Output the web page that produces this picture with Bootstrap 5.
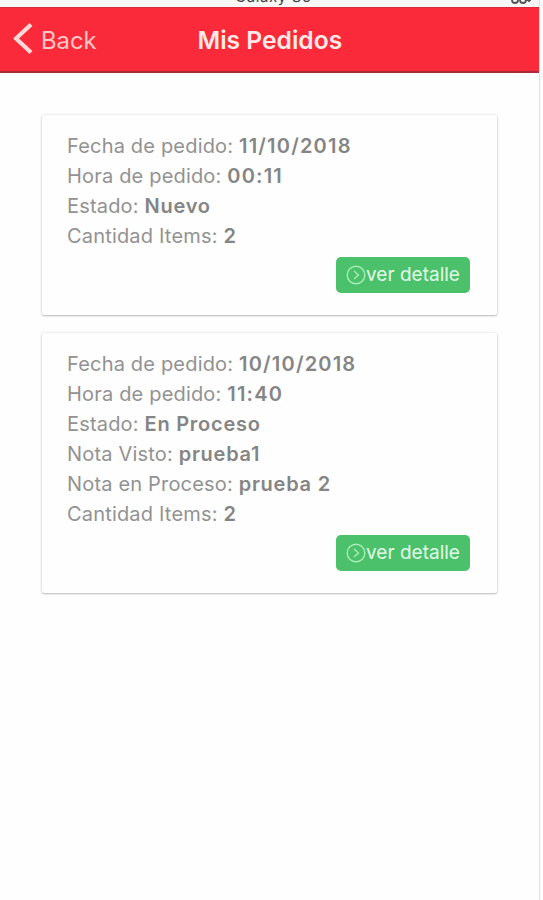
<!DOCTYPE html>
<html lang="es">
<head>
<meta charset="utf-8">
<meta name="viewport" content="width=device-width, initial-scale=1">
<title>Mis Pedidos</title>
<link href="https://cdn.jsdelivr.net/npm/bootstrap@5.3.0/dist/css/bootstrap.min.css" rel="stylesheet">
<style>
body{font-family:Inter,"Liberation Sans",sans-serif;height:900px;background:#fdfdfd}
.phone{width:540px;height:900px;background:#fefefe;border-right:1px solid #e2e2e2}
.device-bar{height:7px;background:#f7f7f7;color:#444;font-size:15px;line-height:16px}
.device-name{width:76px;margin-left:235px;margin-top:-11px;letter-spacing:.6px}
.device-state{margin-right:8px;margin-top:-11px}
.topbar{height:66px;background:#fb2a3b;border-top:1px solid #d92a3c;border-bottom:2px solid #a82b3b;padding:2px 0 0 13px}
.back-link{color:#ffc6c4;font-size:23.8px;width:184.5px;gap:8px}
.back-link svg{margin-top:-3px}
.page-title{color:#ffe9e6;font-size:24.6px;font-weight:600}
.orders{padding:42px 42px 0 42px;gap:18px}
.order{border-radius:2px;background:#fefefe;box-shadow:0 1px 2px rgba(0,0,0,.23),0 0 3px rgba(0,0,0,.13);padding:17.4px 27px 22px 25px;color:#929292;font-size:20px;line-height:29.9px;letter-spacing:.18px}
.order strong{font-weight:600;color:#858585;letter-spacing:.75px}
.order .order-date{letter-spacing:1.2px}
.detail-btn{--bs-btn-color:#e2fbe7;--bs-btn-bg:#4bc16c;--bs-btn-border-color:#4bc16c;--bs-btn-hover-bg:#42b462;--bs-btn-hover-color:#fff;width:134px;height:36px;margin-top:5px;padding:0;border:0;border-radius:5px;font-size:19px;line-height:36px;letter-spacing:0}
</style>
</head>
<body>
<div class="phone d-flex flex-column overflow-hidden">
  <div class="device-bar d-flex justify-content-between overflow-hidden flex-shrink-0">
    <span class="device-name text-nowrap">Galaxy S5</span>
    <svg class="device-state" width="20" height="16" viewBox="0 0 20 16" fill="none" stroke="#555" stroke-width="1.8"><path d="M1 9v2q0 3 3 3t3-3V9M9 9v2q0 3 3 3t3-3M15 11h5M18 8v5"/></svg>
  </div>
  <nav class="topbar d-flex align-items-center flex-shrink-0">
    <a href="#" class="back-link d-flex align-items-center text-decoration-none">
      <svg width="20" height="34" viewBox="0 0 20 34" fill="none" stroke="#ffd9d6" stroke-width="4.2"><path d="M18 2.5 3 16.5l15 14"/></svg>
      <span>Back</span>
    </a>
    <h1 class="page-title mb-0 text-nowrap">Mis Pedidos</h1>
  </nav>
  <main class="orders d-flex flex-column">
    <article class="order">
      <div>Fecha de pedido: <strong class="order-date">11/10/2018</strong></div>
      <div>Hora de pedido: <strong class="order-date">00:11</strong></div>
      <div>Estado: <strong>Nuevo</strong></div>
      <div>Cantidad Items: <strong>2</strong></div>
      <div class="d-flex justify-content-end">
        <button type="button" class="btn detail-btn d-flex align-items-center justify-content-center">
          <svg width="20" height="20" viewBox="0 0 20 20" fill="none" stroke="#a9edb5" stroke-width="1.4"><circle cx="10" cy="10" r="8.8"/><path d="m8 6 4.5 4L8 14"/></svg><span>ver detalle</span>
        </button>
      </div>
    </article>
    <article class="order">
      <div>Fecha de pedido: <strong class="order-date">10/10/2018</strong></div>
      <div>Hora de pedido: <strong class="order-date">11:40</strong></div>
      <div>Estado: <strong>En Proceso</strong></div>
      <div>Nota Visto: <strong>prueba1</strong></div>
      <div>Nota en Proceso: <strong>prueba 2</strong></div>
      <div>Cantidad Items: <strong>2</strong></div>
      <div class="d-flex justify-content-end">
        <button type="button" class="btn detail-btn d-flex align-items-center justify-content-center">
          <svg width="20" height="20" viewBox="0 0 20 20" fill="none" stroke="#a9edb5" stroke-width="1.4"><circle cx="10" cy="10" r="8.8"/><path d="m8 6 4.5 4L8 14"/></svg><span>ver detalle</span>
        </button>
      </div>
    </article>
  </main>
</div>
<script src="https://cdn.jsdelivr.net/npm/bootstrap@5.3.0/dist/js/bootstrap.bundle.min.js"></script>
</body>
</html>
